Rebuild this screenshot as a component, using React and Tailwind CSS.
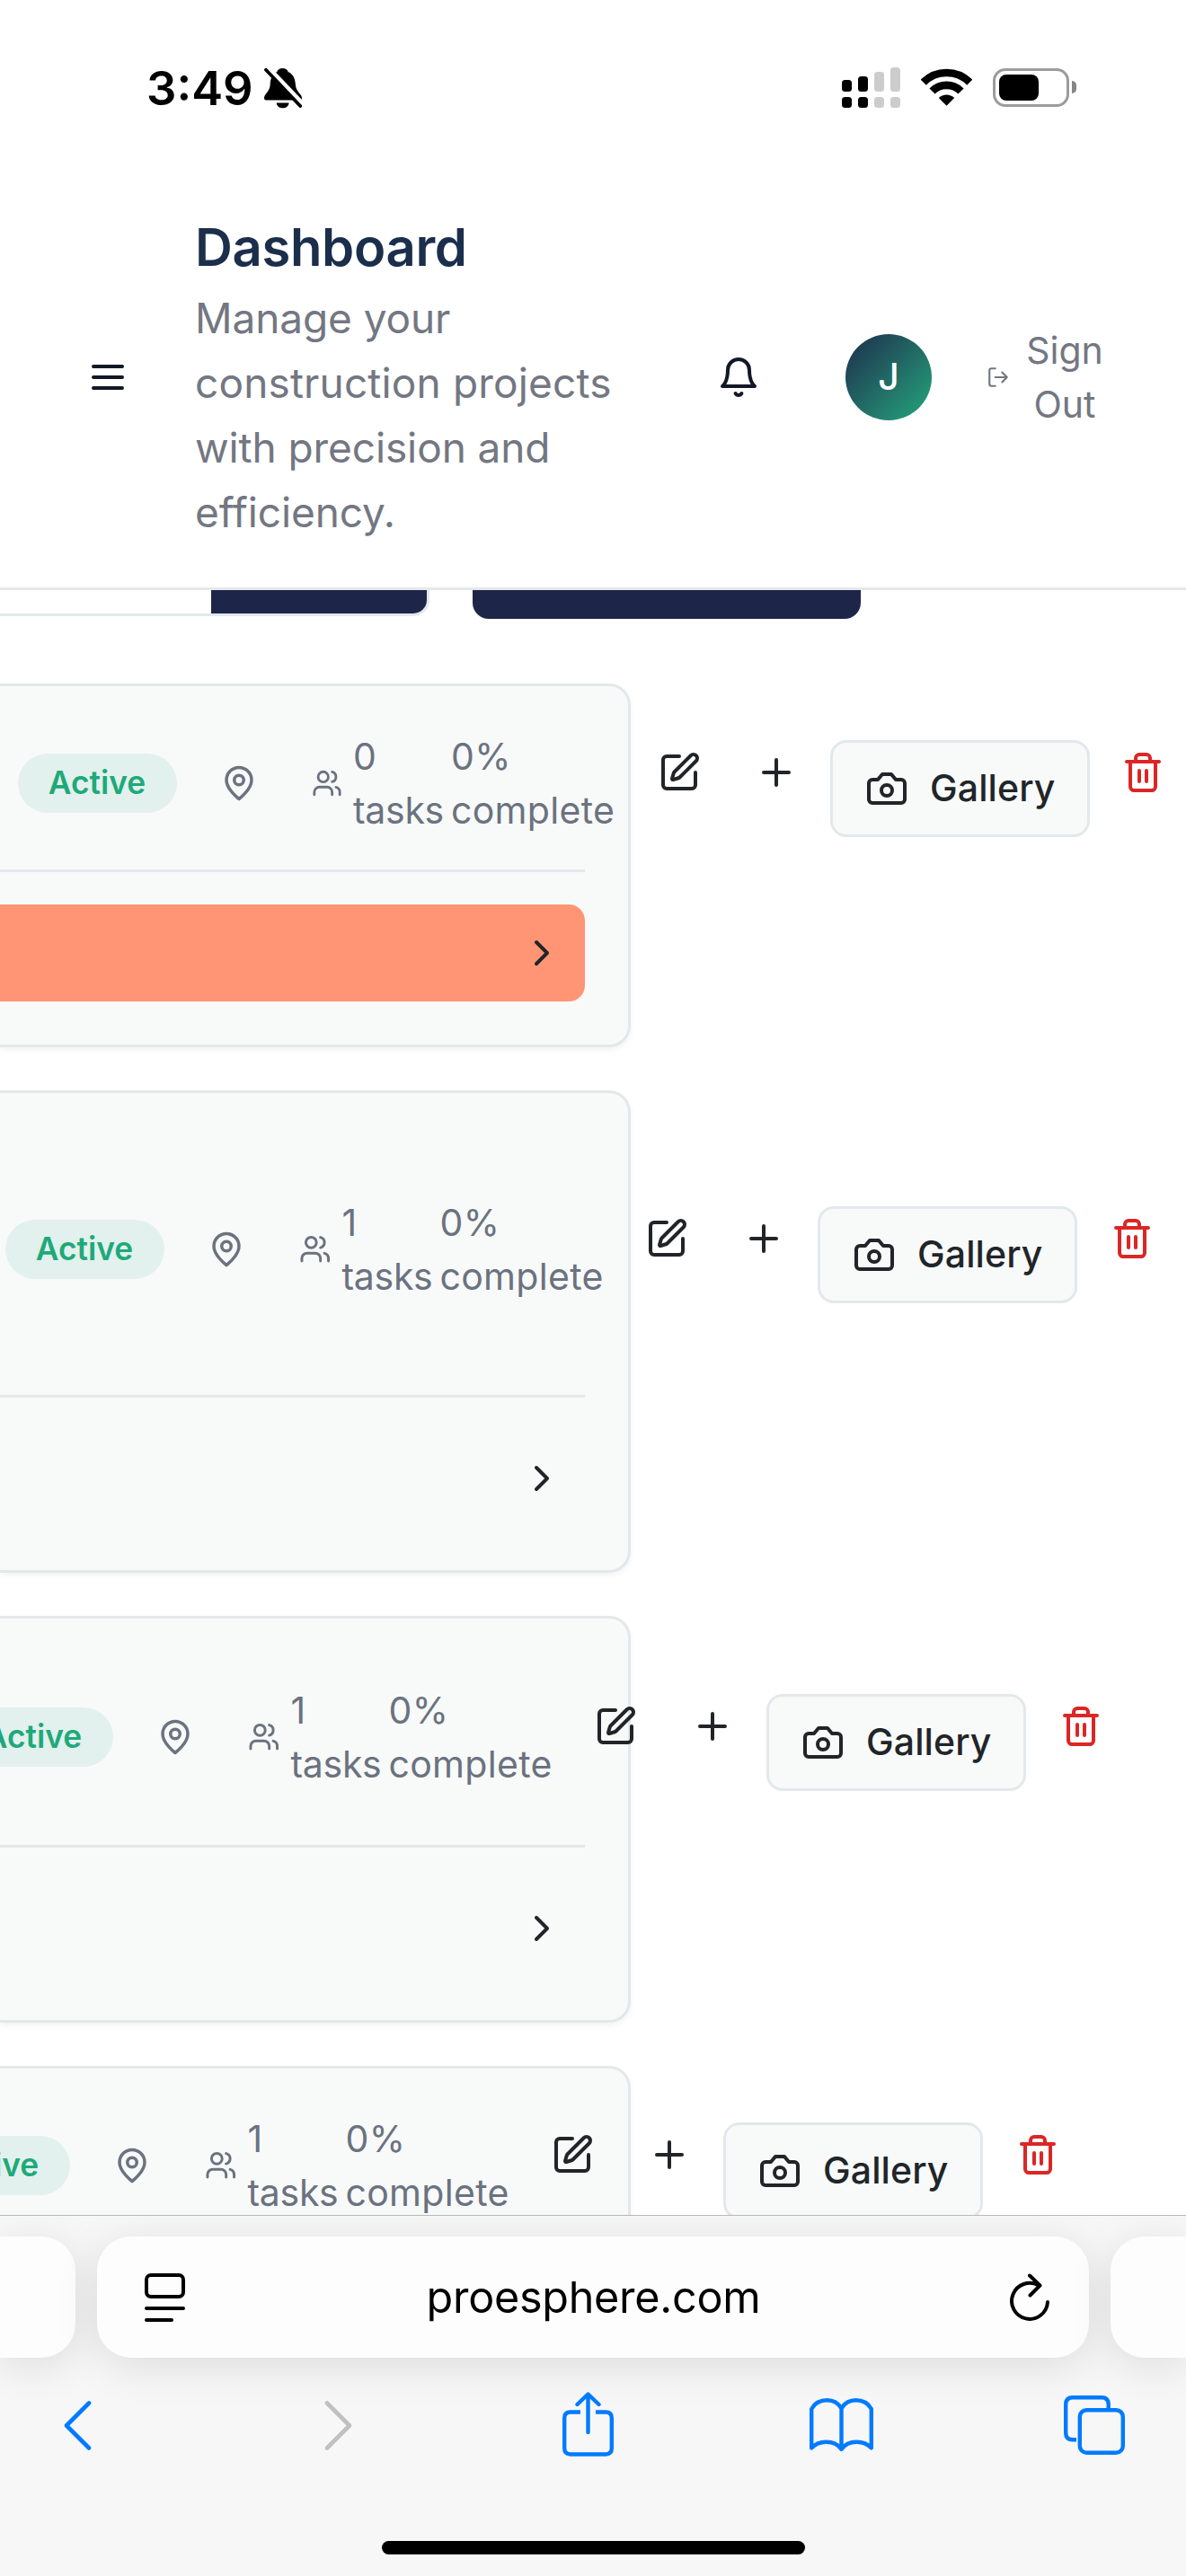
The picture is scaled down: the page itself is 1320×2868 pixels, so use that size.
import React from "react";

function Icon({ size = 48, stroke = 2, className = "", children }) {
  return (
    <svg
      width={size}
      height={size}
      viewBox="0 0 24 24"
      fill="none"
      stroke="currentColor"
      strokeWidth={stroke}
      strokeLinecap="round"
      strokeLinejoin="round"
      className={"block shrink-0 " + className}
    >
      {children}
    </svg>
  );
}

const MenuIcon = () => (
  <Icon>
    <path d="M4 6h16M4 12h16M4 18h16" />
  </Icon>
);

const BellIcon = () => (
  <Icon>
    <path d="M6 8a6 6 0 0 1 12 0c0 7 3 9 3 9H3s3-2 3-9" />
    <path d="M10.3 21a1.94 1.94 0 0 0 3.4 0" />
  </Icon>
);

const LogOutIcon = () => (
  <Icon size={26}>
    <path d="M9 21H5a2 2 0 0 1-2-2V5a2 2 0 0 1 2-2h4" />
    <path d="m16 17 5-5-5-5M21 12H9" />
  </Icon>
);

const PinIcon = () => (
  <Icon size={42}>
    <path d="M20 10c0 6-8 12-8 12s-8-6-8-12a8 8 0 0 1 16 0Z" />
    <circle cx="12" cy="10" r="3" />
  </Icon>
);

const UsersIcon = ({ size }) => (
  <Icon size={size}>
    <path d="M16 21v-2a4 4 0 0 0-4-4H6a4 4 0 0 0-4 4v2" />
    <circle cx="9" cy="7" r="4" />
    <path d="M22 21v-2a4 4 0 0 0-3-3.87M16 3.13a4 4 0 0 1 0 7.75" />
  </Icon>
);

const EditIcon = ({ className }) => (
  <Icon className={className}>
    <path d="M12 3H5a2 2 0 0 0-2 2v14a2 2 0 0 0 2 2h14a2 2 0 0 0 2-2v-7" />
    <path d="M18.375 2.625a1 1 0 0 1 3 3l-9.013 9.014a2 2 0 0 1-.853.505l-2.873.84a.5.5 0 0 1-.62-.62l.84-2.873a2 2 0 0 1 .506-.852z" />
  </Icon>
);

const PlusIcon = ({ className }) => (
  <Icon className={className}>
    <path d="M5 12h14M12 5v14" />
  </Icon>
);

const CameraIcon = () => (
  <Icon>
    <path d="M14.5 4h-5L7 7H4a2 2 0 0 0-2 2v9a2 2 0 0 0 2 2h16a2 2 0 0 0 2-2V9a2 2 0 0 0-2-2h-3l-2.5-3z" />
    <circle cx="12" cy="13" r="3" />
  </Icon>
);

const TrashIcon = ({ className }) => (
  <Icon className={className}>
    <path d="M3 6h18M19 6v14c0 1-1 2-2 2H7c-1 0-2-1-2-2V6M8 6V4c0-1 1-2 2-2h4c1 0 2 1 2 2v2M10 11v6M14 11v6" />
  </Icon>
);

const ChevronIcon = () => (
  <Icon>
    <path d="m9 18 6-6-6-6" />
  </Icon>
);

const SIGNAL = [
  { bar: "h-[13px]", color: "bg-black" },
  { bar: "h-[17px]", color: "bg-black" },
  { bar: "h-[22px]", color: "bg-[#cccccc]" },
  { bar: "h-[27px]", color: "bg-[#cccccc]" },
];

function StatusBar() {
  return (
    <div className="flex h-[186px] shrink-0 items-start justify-between pt-[68px] pr-[122px] pl-[163px]">
      <div className="flex h-[60px] items-center">
        <span className="text-[52.5px] leading-[60px] font-semibold text-black">3:49</span>
        <svg width="42" height="46" viewBox="0 0 42 46" className="ml-[12px]">
          <path
            d="M20.5 1C17.5 1 15 2.6 14.3 5C8.5 7.5 6.9 13 6.6 20C6.3 26.5 0 30 0 34C0 36 1 36.5 3 36.5H38.5C41 36.5 42 36 42 34C42 30 35.5 27 35 20C34.6 13 32.5 7.5 26.7 5C26 2.6 23.5 1 20.5 1Z"
            fill="#000"
          />
          <path d="M13.7 39.5H27.6C27.3 43 24.4 45.3 20.6 45.3C16.8 45.3 14 43 13.7 39.5Z" fill="#000" />
          <path d="M3.5 1L42 41.5" stroke="#fff" strokeWidth="7.5" />
          <path d="M2 2.8L40.2 43" stroke="#000" strokeWidth="3.8" strokeLinecap="round" />
        </svg>
      </div>
      <div className="flex h-[58px] items-center">
        <div className="flex items-end gap-[7px]">
          {SIGNAL.map((s, i) => (
            <div key={i} className="flex w-[11px] flex-col gap-[6px]">
              <div className={"rounded-[3.5px] " + s.bar + " " + s.color} />
              <div className={"h-[12px] rounded-[3.5px] " + s.color} />
            </div>
          ))}
        </div>
        <svg width="57" height="42" viewBox="0 0 57 42" className="ml-[23px]" fill="none">
          <path d="M2.7 15.7A36.5 36.5 0 0 1 54.3 15.7" stroke="#000" strokeWidth="8.7" />
          <path d="M12.5 25.5A22.6 22.6 0 0 1 44.5 25.5" stroke="#000" strokeWidth="8.7" />
          <path d="M28.5 41.7L19.8 33A12.4 12.4 0 0 1 37.2 33Z" fill="#000" />
        </svg>
        <div className="ml-[23px] h-[43px] w-[85px] rounded-[14px] border-3 border-[#9c9c9c] p-[4px]">
          <div className="h-[29px] w-[44px] rounded-[8px] bg-black" />
        </div>
        <div className="ml-[3px] h-[14px] w-[5px] rounded-r-full bg-[#858585]" />
      </div>
    </div>
  );
}

function Header() {
  return (
    <header className="flex h-[471px] shrink-0 items-center border-b-3 border-[#e5e7eb] bg-white text-[#111827]">
      <div className="ml-[96px]">
        <MenuIcon />
      </div>
      <div className="ml-[73px] w-[480px] pt-[5px]">
        <h1 className="text-[58px] leading-[72px] font-semibold tracking-[-0.36px] text-[#1b2e4b]">Dashboard</h1>
        <p className="mt-[7px] text-[46px] leading-[72px] tracking-[-0.1px] text-[#737782]">
          Manage your
          <br />
          <span className="tracking-[0.15px]">construction projects</span>
          <br />
          with precision and
          <br />
          efficiency.
        </p>
      </div>
      <div className="ml-[101px]">
        <BellIcon />
      </div>
      <div className="ml-[95px] flex size-[96px] items-center justify-center rounded-full bg-linear-to-br from-[#1b2e4b] to-[#20a87b] text-[41px] font-medium text-white">
        J
      </div>
      <div className="ml-[61px] flex items-center text-[#737782]">
        <LogOutIcon />
        <span className="ml-[16px] w-[90px] text-center text-[41px] leading-[60px]">
          Sign
          <br />
          Out
        </span>
      </div>
    </header>
  );
}

function Toolbar() {
  return (
    <div className="flex h-[104px] items-start">
      <div className="flex h-[29px] w-[478px] justify-end rounded-br-[18px] border-r-3 border-b-3 border-[#e2e8ec] bg-white">
        <div className="h-[26px] w-[240px] rounded-br-[15px] bg-[#1d2648]" />
      </div>
      <div className="ml-[48px] h-[32px] w-[432px] rounded-b-[18px] bg-[#1d2648]" />
    </div>
  );
}

const PROJECTS = [
  { tasks: 0, row: "h-[120px] ml-[20px]", users: 34, trash: "ml-[35px]", highlight: true },
  { tasks: 1, row: "h-[252px] ml-[6px]", users: 35.5, trash: "ml-[37px]", highlight: false },
  { tasks: 1, row: "h-[168px] ml-[-51px]", users: 35.5, trash: "ml-[37px]", highlight: false },
  { tasks: 1, row: "h-[120px] ml-[-99px]", users: 35.5, trash: "ml-[37px]", highlight: false },
];

function ProjectCard({ project }) {
  return (
    <article className="w-[702px] rounded-r-[24px] border-3 border-l-0 border-[#e2e8ec] bg-[#f8faf9] py-[48px] pr-[48px] shadow-[0_3px_6px_rgba(0,0,0,0.05)]">
      <div className={"flex w-max items-center " + project.row}>
        <span className="flex h-[66px] w-[177px] items-center justify-center rounded-full bg-[#e2f1ed] pr-[1px] text-[35.3px] leading-none font-semibold text-[#1fa97a]">
          Active
        </span>
        <div className="ml-[48px] flex w-[487px] items-center text-[41px] leading-[60px] text-[#6b7280]">
          <PinIcon />
          <div className="ml-[60px] flex items-center gap-[12px]">
            <UsersIcon size={project.users} />
            <span className="w-[109px]">
              {project.tasks}
              <br />
              <span className="tracking-[-0.3px]">tasks</span>
            </span>
          </div>
          <span className="tracking-[0.3px]">
            0%
            <br />
            complete
          </span>
        </div>
        <div className="flex h-[120px] items-start text-[#212529]">
          <EditIcon className="mt-[24px]" />
          <PlusIcon className="mt-[24px] ml-[60px]" />
          <button className="mt-[12px] ml-[36px] flex h-[108px] w-[289px] items-center gap-[24px] rounded-[18px] border-3 border-[#e2e8ec] bg-[#f8faf9] pl-[36px] text-[41px] font-medium tracking-[0.1px]">
            <CameraIcon />
            Gallery
          </button>
          <TrashIcon className={"mt-[24px] text-[#dc2626] " + project.trash} />
        </div>
      </div>
      <div className="mt-[36px] border-t-3 border-[#e2e8ec] pt-[36px] text-[#212529]">
        <div
          className={
            "flex h-[108px] items-center justify-end rounded-r-[18px] pr-[24px] " +
            (project.highlight ? "bg-[#ff9575]" : "")
          }
        >
          <ChevronIcon />
        </div>
      </div>
    </article>
  );
}

function AddressBar() {
  return (
    <div className="flex h-[135px] justify-between">
      <div className="w-[84px] rounded-r-[38px] bg-[#fdfdfd] shadow-[0_9px_48px_rgba(0,0,0,0.11)]" />
      <div className="flex w-[1104px] items-center justify-between rounded-[38px] bg-[#fdfdfd] pr-[42px] pl-[53px] text-black shadow-[0_9px_48px_rgba(0,0,0,0.11)]">
        <svg width="45" height="54" viewBox="0 0 45 54" fill="none" stroke="currentColor" strokeWidth="4" strokeLinecap="round">
          <rect x="2" y="2" width="41" height="24" rx="5" />
          <path d="M2 39H43M2 52H30" />
        </svg>
        <span className="pt-[1px] pr-[7px] text-[48.5px] tracking-[-0.27px]">proesphere.com</span>
        <svg width="48" height="54" viewBox="0 0 48 54" fill="none" stroke="currentColor" strokeWidth="4" strokeLinecap="round" strokeLinejoin="round">
          <path d="M44 32A20 20 0 1 1 34 13.5" />
          <path d="M24 2.5L35.5 13.5L24.5 24.5" />
        </svg>
      </div>
      <div className="w-[84px] rounded-l-[38px] bg-[#fdfdfd] shadow-[0_9px_48px_rgba(0,0,0,0.11)]" />
    </div>
  );
}

function BrowserToolbar() {
  const common = { fill: "none", stroke: "currentColor", strokeWidth: 4.6, strokeLinecap: "round", strokeLinejoin: "round" };
  return (
    <div className="flex h-[146px] items-center pl-[71px] text-[#007aff]">
      <svg width="31" height="55" viewBox="0 0 31 55" {...common}>
        <path d="M28 2.5L3 27.5L28 52.5" />
      </svg>
      <svg width="31" height="55" viewBox="0 0 31 55" {...common} className="ml-[259px] text-[#c0c0c0]">
        <path d="M3 2.5L28 27.5L3 52.5" />
      </svg>
      <svg width="57" height="72" viewBox="0 0 57 72" {...common} strokeWidth="4.4" className="-mt-[3px] ml-[234px]">
        <path d="M20 22.5H9Q2.2 22.5 2.2 29V62.5Q2.2 69.5 9 69.5H48Q54.8 69.5 54.8 62.5V29Q54.8 22.5 48 22.5H37" strokeLinecap="butt" />
        <path d="M28.5 3V45M16.5 14L28.5 2.5L40.5 14" />
      </svg>
      <svg width="71" height="60" viewBox="0 0 71 60" {...common} strokeWidth="4.4" className="ml-[218px]">
        <path d="M35.5 11.5C32 5.5 26 2.3 19.5 2.3C12 2.3 5.5 6 2.2 12V55.5C6 51.5 12 48.8 18.5 48.8C26 48.8 32 51.8 35.5 57C39 51.8 45 48.8 52.5 48.8C59 48.8 65 51.5 68.8 55.5V12C65.5 6 59 2.3 51.5 2.3C45 2.3 39 5.5 35.5 11.5ZM35.5 11.5V56" />
      </svg>
      <svg width="68" height="66" viewBox="0 0 68 66" {...common} strokeWidth="4.4" className="ml-[212px]">
        <path d="M14 49.3H10Q2.2 49.3 2.2 42V10Q2.2 2.3 10 2.3H42Q49.7 2.3 49.7 10V14" strokeLinecap="butt" />
        <rect x="17.8" y="16.2" width="48" height="47.5" rx="7.5" />
      </svg>
    </div>
  );
}

function BrowserChrome() {
  return (
    <footer className="h-[402px] shrink-0 overflow-hidden border-t border-[#b9b9bb] bg-[#f7f7f7] pt-[23px]">
      <AddressBar />
      <div className="relative pt-[2px]">
        <BrowserToolbar />
      </div>
      <div className="mx-auto mt-[56px] h-[15px] w-[471px] rounded-full bg-black" />
    </footer>
  );
}

export default function App() {
  return (
    <div className="flex h-[2868px] w-[1320px] flex-col overflow-hidden bg-white font-['Inter',sans-serif] antialiased">
      <StatusBar />
      <Header />
      <main className="min-h-0 flex-1 overflow-hidden">
        <Toolbar />
        <div className="flex flex-col gap-[48px]">
          {PROJECTS.map((p, i) => (
            <ProjectCard key={i} project={p} />
          ))}
        </div>
      </main>
      <BrowserChrome />
    </div>
  );
}
